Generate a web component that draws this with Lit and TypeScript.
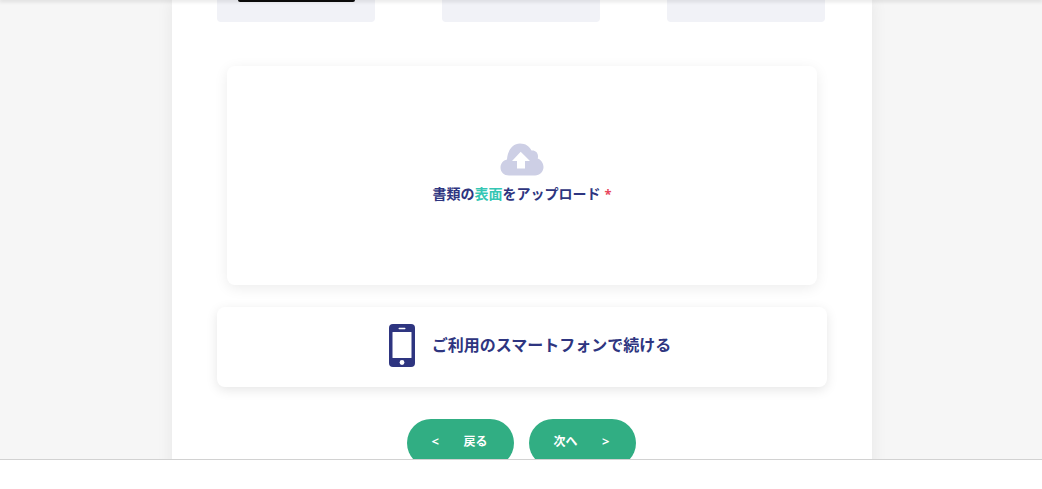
import { LitElement, html, css } from "lit";
import { customElement } from "lit/decorators.js";

@customElement("app-root")
export class AppRoot extends LitElement {
  static styles = css`
    :host {
      display: block;
      height: 489px;
      background: #fff;
      font-family: "Noto Sans CJK JP", "Noto Sans", sans-serif;
      overflow: hidden;
    }
    .viewport {
      height: 460px;
      box-sizing: border-box;
      background: #f6f6f6;
      border-bottom: 1px solid #d2d2d2;
      overflow: hidden;
      position: relative;
      display: flex;
      justify-content: center;
      padding-left: 2px;
    }
    .topshade {
      position: absolute;
      top: 0;
      left: 0;
      right: 0;
      height: 0;
      box-shadow: 0 0 4px 1px rgba(0, 0, 0, 0.2);
      z-index: 2;
    }
    .card {
      width: 700px;
      height: 520px;
      flex: none;
      background: #fff;
      box-shadow: 0 0 16px rgba(0, 0, 0, 0.07);
      padding: 0 45px;
      box-sizing: border-box;
      display: flex;
      flex-direction: column;
      align-items: center;
    }
    .thumbs {
      align-self: stretch;
      display: flex;
      gap: 67px;
      padding-right: 2px;
    }
    .thumb {
      width: 158px;
      height: 22px;
      background: #f1f2f7;
      border-radius: 0 0 4px 4px;
      display: flex;
      justify-content: center;
    }
    .black {
      width: 117px;
      height: 2px;
      background: #0c0c0c;
      border-radius: 0 0 3px 3px;
    }
    .upload {
      margin-top: 44px;
      width: 590px;
      height: 219px;
      background: #fff;
      border-radius: 8px;
      box-shadow: 0 3px 14px rgba(0, 0, 0, 0.08);
      display: flex;
      flex-direction: column;
      align-items: center;
      padding-top: 77px;
      box-sizing: border-box;
    }
    .cloud {
      width: 44px;
      height: 33px;
      display: block;
    }
    .upload-label {
      margin-top: 7px;
      font-size: 14px;
      line-height: 20px;
      font-weight: 700;
      color: #2e3580;
    }
    .teal {
      color: #35c6b4;
    }
    .req {
      color: #e8475c;
      margin-left: 4px;
      font-size: 13px;
      font-family: "Noto Sans", sans-serif;
    }
    .phone-row {
      margin-top: 22px;
      width: 610px;
      height: 80px;
      flex: none;
      background: #fff;
      border-radius: 8px;
      box-shadow: 0 3px 12px rgba(0, 0, 0, 0.1);
      display: flex;
      align-items: center;
      justify-content: center;
      gap: 17px;
      padding-left: 16px;
      padding-bottom: 3px;
      box-sizing: border-box;
    }
    .phone {
      width: 26px;
      height: 43px;
      display: block;
    }
    .phone-label {
      font-size: 16px;
      font-weight: 700;
      color: #2e3580;
      line-height: 24px;
      margin-bottom: 3px;
    }
    .actions {
      margin-top: 32px;
      margin-right: 2px;
      display: flex;
      gap: 15px;
    }
    .btn {
      width: 107px;
      height: 48px;
      border: 0;
      border-radius: 24px;
      background: #31ae83;
      color: #fff;
      font-family: inherit;
      font-size: 12px;
      font-weight: 700;
      display: flex;
      align-items: center;
      justify-content: space-between;
      padding: 0 26px 5px 25px;
      box-sizing: border-box;
    }
    .chev {
      font-family: "Noto Sans", sans-serif;
      font-size: 13px;
    }
  `;

  render() {
    return html`
      <div class="viewport">
        <div class="topshade"></div>
        <div class="card">
          <div class="thumbs">
            <div class="thumb"><div class="black"></div></div>
            <div class="thumb"></div>
            <div class="thumb"></div>
          </div>
          <div class="upload">
            <svg class="cloud" viewBox="0 0 44 33" aria-hidden="true">
              <path
                fill="#cdcfe5"
                d="M9 32.500C4 32.500.5 29 .5 24.500c0-4 2.700-7.300 6.500-8C7.500 7 13 .5 20 .5c5.500 0 9.500 2.800 11.500 7 3.500-.5 6.500 2 6.500 5.700 0 .8-.1 1.500-.3 2.200 3.300 1.200 5.800 4.600 5.800 8.600 0 4.800-3.700 8.500-8.500 8.500Z"
              />
              <path fill="#fff" d="M20.700 8.700 30 18h-5v7.500h-8V18h-5Z" />
            </svg>
            <div class="upload-label">
              書類の<span class="teal">表面</span>をアップロード<span class="req"
                >*</span
              >
            </div>
          </div>
          <div class="phone-row">
            <svg class="phone" viewBox="0 0 26 43" aria-hidden="true">
              <rect width="26" height="43" rx="4" fill="#2e3580" />
              <rect x="3.500" y="8" width="19" height="26" rx="0.500" fill="#fff" />
              <rect x="9.500" y="3.700" width="7" height="1.500" rx="0.700" fill="#fff" />
              <circle cx="13" cy="38.500" r="2.400" fill="#fff" />
            </svg>
            <div class="phone-label">ご利用のスマートフォンで続ける</div>
          </div>
          <div class="actions">
            <button class="btn"><span class="chev">&lt;</span><span>戻る</span></button>
            <button class="btn"><span>次へ</span><span class="chev">&gt;</span></button>
          </div>
        </div>
      </div>
    `;
  }
}
